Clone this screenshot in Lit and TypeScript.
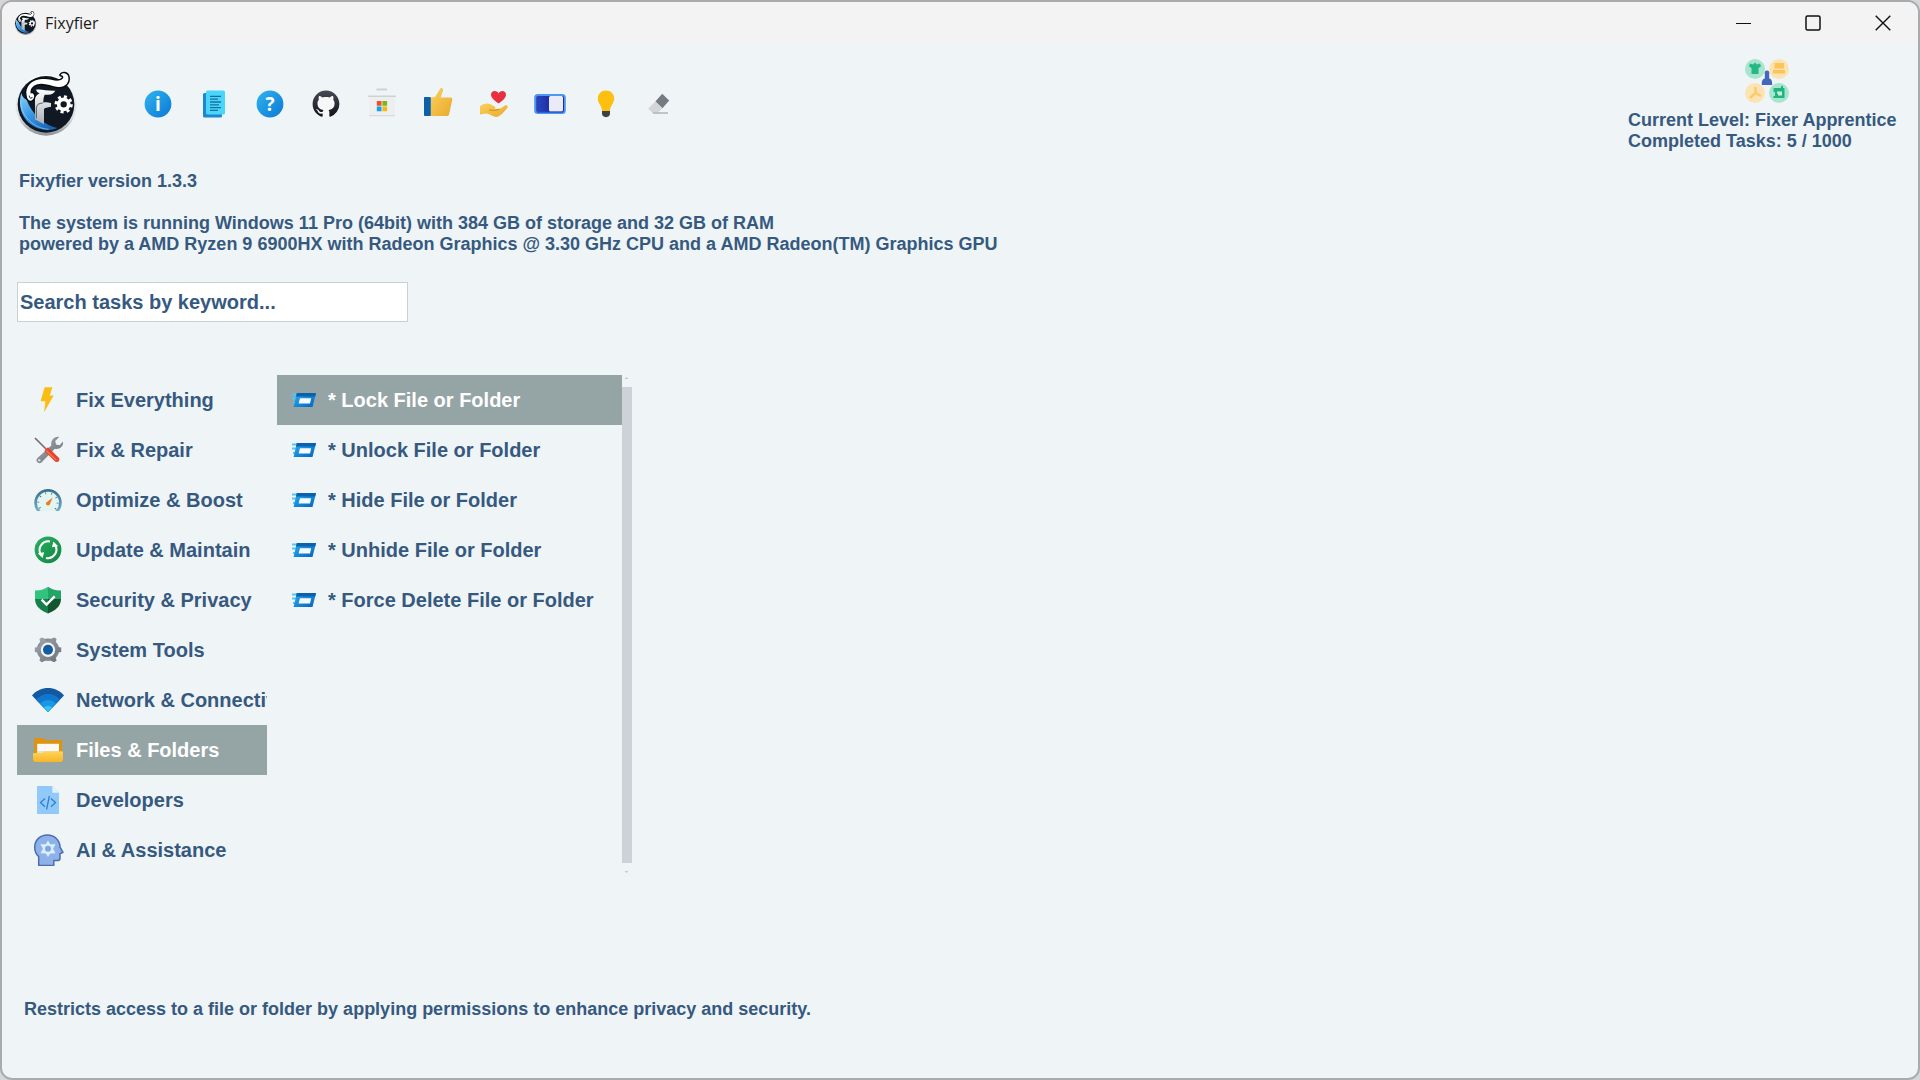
import { LitElement, html, css, svg, TemplateResult } from "lit";
import { customElement, property, state } from "lit/decorators.js";
import { classMap } from "lit/directives/class-map.js";

const logo = html`<svg viewBox="45 212 186 195" aria-hidden="true">
  <defs>
    <linearGradient id="rim" x1="0" y1="0" x2="0" y2="1">
      <stop offset="0" stop-color="#fdfdfd" /><stop offset="0.7" stop-color="#dcdee0" /><stop offset="1" stop-color="#8d9196" />
    </linearGradient>
    <linearGradient id="swoosh" x1="0" y1="0" x2="0.7" y2="1">
      <stop offset="0" stop-color="#8fd4f8" /><stop offset="0.5" stop-color="#3a9be8" /><stop offset="1" stop-color="#1765b8" />
    </linearGradient>
    <linearGradient id="stem" x1="0" y1="0" x2="0" y2="1">
      <stop offset="0" stop-color="#ffffff" /><stop offset="1" stop-color="#a9adb2" />
    </linearGradient>
  </defs>
  <circle cx="138" cy="315" r="91" fill="url(#rim)" />
  <circle cx="138" cy="312" r="85" fill="#101923" />
  <path d="M64 278C48 330 80 388 144 389C156 389 164 387 172 383C136 376 96 344 80 298C72 296 66 288 64 278Z" fill="url(#swoosh)" />
  <path d="M61 300C62 346 100 384 146 387" fill="none" stroke="#9fd8f8" stroke-width="2" />
  <path d="M80 286C74 258 96 238 126 236C148 234 166 244 180 240C192 236 194 226 182 224C186 216 202 216 205 230C208 248 194 262 174 260C152 257 132 246 112 252C96 257 90 268 92 280C98 275 106 284 101 294C95 306 82 302 80 286Z" fill="#fff" stroke="#080d12" stroke-width="9" stroke-linejoin="round" paint-order="stroke" />
  <path d="M88 286C88 295 95 296 97 290" fill="none" stroke="#101923" stroke-width="3" />
  <path d="M108 268C124 265 140 272 166 271C161 279 156 283 144 283H134C131 289 130 297 130 307C136 304 146 308 153 308V319C142 322 134 321 132 326V372L105 357V300C105 288 113 282 119 279C113 277 110 273 108 268Z" fill="url(#stem)" />
  <path d="M109 354V322C110 312 118 309 128 308" fill="none" stroke="#4d555e" stroke-width="3" />
  <circle cx="191" cy="312" r="15" fill="none" stroke="#fff" stroke-width="11" />
  <circle cx="191" cy="312" r="23" fill="none" stroke="#fff" stroke-width="9" stroke-dasharray="9.06 9" />
</svg>`;

const tool = (body: TemplateResult) => html`<svg viewBox="0 0 40 40" aria-hidden="true">
  <defs>
    <linearGradient id="azure" x1="0" y1="0" x2="1" y2="1">
      <stop offset="0" stop-color="#31b4ee" /><stop offset="1" stop-color="#0a78d6" />
    </linearGradient>
    <linearGradient id="gold" x1="0" y1="0" x2="1" y2="1">
      <stop offset="0" stop-color="#fbd15c" /><stop offset="1" stop-color="#e9a92c" />
    </linearGradient>
    <linearGradient id="track" x1="0" y1="0" x2="1" y2="0">
      <stop offset="0" stop-color="#2a49c4" /><stop offset="1" stop-color="#10147e" />
    </linearGradient>
    <linearGradient id="cat" x1="0" y1="0" x2="0" y2="1">
      <stop offset="0" stop-color="#474b55" /><stop offset="1" stop-color="#101217" />
    </linearGradient>
  </defs>
  ${body}
</svg>`;

const toolbar: { label: string; art: TemplateResult }[] = [
  {
    label: "About",
    art: svg`<circle cx="20" cy="20" r="13.4" fill="url(#azure)"/>
      <text class="mark" x="20" y="27" text-anchor="middle">i</text>`,
  },
  {
    label: "Changelog",
    art: svg`<rect x="9" y="9" width="19" height="24.4" rx="1.5" fill="#1c86d1"/>
      <rect x="12" y="6.4" width="19" height="24" rx="1.5" fill="#4cd5fb"/>
      <path d="M16 12.4h11M16 15.2h8M16 18h11M16 20.8h9M16 23.6h11M16 26.4h8" stroke="#15719f" stroke-width="1.3"/>`,
  },
  {
    label: "Help",
    art: svg`<circle cx="20" cy="20" r="13.4" fill="url(#azure)"/>
      <text class="mark" x="20" y="27" text-anchor="middle">?</text>`,
  },
  {
    label: "GitHub",
    art: svg`<circle cx="20" cy="20" r="12.6" fill="#f6f7f9"/>
      <path transform="translate(6.6 6.6) scale(1.675)" fill="url(#cat)" d="M8 0C3.58 0 0 3.58 0 8c0 3.54 2.29 6.53 5.47 7.59.4.07.55-.17.55-.38 0-.19-.01-.82-.01-1.49-2.01.37-2.53-.49-2.69-.94-.09-.23-.48-.94-.82-1.13-.28-.15-.68-.52-.01-.53.63-.01 1.08.58 1.23.82.72 1.21 1.87.87 2.33.66.07-.52.28-.87.51-1.07-1.78-.2-3.64-.89-3.64-3.95 0-.87.31-1.59.82-2.15-.08-.2-.36-1.02.08-2.12 0 0 .67-.21 2.2.82.64-.18 1.32-.27 2-.27s1.36.09 2 .27c1.53-1.04 2.2-.82 2.2-.82.44 1.1.16 1.92.08 2.12.51.56.82 1.27.82 2.15 0 3.07-1.87 3.75-3.65 3.95.29.25.54.73.54 1.48 0 1.07-.01 1.93-.01 2.2 0 .21.15.46.55.38A8.01 8.01 0 0 0 16 8c0-4.42-3.58-8-8-8Z"/>`,
  },
  {
    label: "Microsoft Store",
    art: svg`<path d="M14.5 5.6h10.500" stroke="#cfd1d4" stroke-width="2"/>
      <rect x="7" y="12" width="26" height="20" rx="1.5" fill="#eceeef"/>
      <path d="M6 12.300h28" stroke="#cfd1d4" stroke-width="1.600"/>
      <path d="M7 31.600h26" stroke="#d8dadc" stroke-width="1.400"/>
      <path d="M14.800 17h4.700v4.700h-4.700z" fill="#ee5126"/><path d="M20.400 17h4.700v4.700h-4.700z" fill="#7cb51c"/>
      <path d="M14.800 22.500h4.700v4.700h-4.700z" fill="#16a2ea"/><path d="M20.400 22.500h4.700v4.700h-4.700z" fill="#fbb612"/>`,
  },
  {
    label: "Rate",
    art: svg`<path d="M12.600 13.500L17 13L22.400 4.400C23.300 3.300 25.500 4.600 25.100 6.300L22.600 13.400H32.500C33.900 13.400 34.600 14.500 34.300 15.700L31 30.400C30.700 31.500 29.900 32 28.900 32H12.600Z" fill="url(#gold)"/>
      <rect x="6" y="13" width="6.800" height="19" rx=".8" fill="#0c5fa9"/>`,
  },
  {
    label: "Donate",
    art: svg`<path d="M24.600 19.600C19.600 16 17 13.600 17 10.800C17 6.600 22.400 5.800 24.600 9.400C26.800 5.800 32 6.600 32 10.800C32 13.600 29.600 16 24.600 19.600Z" fill="#e8303f"/>
      <path d="M6 22.200C9 20 13.500 18.600 16.500 20.300L20.500 22.600C22 23.600 21.600 24.700 20 24.700L25.500 25L31 21.500C33.500 20.400 34.700 22.600 33 24.200C30.400 27.400 27.500 31.600 22.500 33C18 32.500 16 29.600 12 29.400L6 30.400Z" fill="url(#gold)"/>
      <path d="M15 25.800C18 26.600 22 26.800 25.500 25" fill="none" stroke="#cf8b1c" stroke-width="1"/>`,
  },
  {
    label: "Switch theme",
    art: svg`<rect x="5.200" y="11" width="29.600" height="18" rx="2.500" fill="url(#track)" stroke="#4d97f0" stroke-width="2"/>
      <rect x="19" y="12" width="14" height="15.600" rx="1.500" fill="#ebebf8"/>
      <path d="M7 28.300h26" stroke="#2a63d8" stroke-width="1.200"/>`,
  },
  {
    label: "Tips",
    art: svg`<path d="M20 6.500C24.700 6.500 28.200 9.900 28.200 14.400C28.200 19.200 24 21.500 24 27H16C16 21.500 11.800 19.200 11.800 14.400C11.800 9.900 15.300 6.500 20 6.500Z" fill="#fdc010"/>
      <path d="M16 27H24V29.600C24 31.800 22.200 33.200 20 33.200S16 31.800 16 29.600Z" fill="#3d4145"/>`,
  },
  {
    label: "Clear",
    art: svg`<path d="M20.200 9.800L27.200 16.600L20.400 24.200L13.400 17.600Z" fill="#757b80"/>
      <path d="M13.400 17.600L20.400 24.200L15.400 29.300H10.800L6.900 25.500C6.300 24.900 6.300 24.300 6.900 23.700Z" fill="#d3d5d8"/>
      <path d="M11 29h15" stroke="#b3b6b9" stroke-width="1.600"/>`,
  },
];

const nav = (body: TemplateResult) => html`<svg viewBox="0 0 32 32" aria-hidden="true">
  <defs>
    <linearGradient id="steel" x1="0" y1="0" x2="1" y2="1">
      <stop offset="0" stop-color="#a6abb1" /><stop offset="1" stop-color="#686e76" />
    </linearGradient>
    <linearGradient id="green" x1="0" y1="0" x2="1" y2="1">
      <stop offset="0" stop-color="#27b15f" /><stop offset="1" stop-color="#128444" />
    </linearGradient>
    <linearGradient id="dial" x1="0" y1="0" x2="0" y2="1">
      <stop offset="0" stop-color="#3d7089" /><stop offset="1" stop-color="#79bbd9" />
    </linearGradient>
    <linearGradient id="pocket" x1="0" y1="0" x2="0" y2="1">
      <stop offset="0" stop-color="#ffd45a" /><stop offset="1" stop-color="#f7b526" />
    </linearGradient>
    <clipPath id="half"><path d="M0 0h32v27H0z" /></clipPath>
  </defs>
  ${body}
</svg>`;

const categories: { label: string; art: TemplateResult }[] = [
  {
    label: "Fix Everything",
    art: svg`<path d="M12.600 3.200H20.400L17.800 11.400H21.700L12 28.300L13.500 17.300H8.600Z" fill="#fcbd13"/>`,
  },
  {
    label: "Fix & Repair",
    art: svg`<path d="M5.500 28.300C3.800 26.800 4.300 25.300 5.500 24L19.300 11.400C18.600 5.800 22.600 2 27.200 3L23.200 7L24 10.500L27.600 11.200L31 7.400C31.800 12 27.600 15.800 22.800 14.700L9.700 28.200C8.400 29.500 7 29.600 5.500 28.300Z" fill="url(#steel)"/>
      <circle cx="7.300" cy="26.200" r="1.200" fill="#d6dade"/>
      <path d="M3 4L14.500 15.500" stroke="#7b6e70" stroke-width="1.700"/>
      <path d="M12.300 17L16 13.200L27 24C28.400 26.600 25.800 29 23.400 27.800Z" fill="#e4432d"/>
      <path d="M14.200 16.500L24.500 26.400" stroke="#f9795a" stroke-width="1.200"/>`,
  },
  {
    label: "Optimize & Boost",
    art: svg`<g clip-path="url(#half)"><circle cx="16" cy="18.700" r="12.400" fill="#e3f5f2" stroke="url(#dial)" stroke-width="2.700"/>
      <circle cx="16" cy="18.700" r="9.700" fill="none" stroke="#3a7188" stroke-width="2" stroke-dasharray=".8 5.293"/></g>
      <path d="M20.700 13.600L17.800 20.400C16.500 22.600 13.200 21 14 18.700Z" fill="#ed7b20"/>`,
  },
  {
    label: "Update & Maintain",
    art: svg`<circle cx="16" cy="15.800" r="13.400" fill="url(#green)"/>
      <path d="M18 7.600A8.600 8.600 0 0 0 8.700 20.200M14 24A8.600 8.600 0 0 0 23.300 11.400" fill="none" stroke="#fff" stroke-width="2"/>
      <path d="M5.800 19.300L12.100 18.300L10.600 24Z" fill="#fff"/><path d="M26.200 12.300L19.900 13.300L21.400 7.600Z" fill="#fff"/>`,
  },
  {
    label: "Security & Privacy",
    art: svg`<path d="M16 2.700C19 5.200 23.500 6.600 29 6.500V15.500H16Z" fill="#23a565"/><path d="M16 2.700C13 5.200 8.500 6.600 3 6.500V15.500H16Z" fill="#34c37e"/>
      <path d="M3 15C3 22 8.500 26.700 16 29.400V15Z" fill="#15804a"/><path d="M29 15C29 22 23.500 26.700 16 29.400V15Z" fill="#12562f"/>
      <path d="M9.600 15.600L14.500 20.500L22.700 12.300" fill="none" stroke="#fff" stroke-width="2.400"/>`,
  },
  {
    label: "System Tools",
    art: svg`<circle cx="16" cy="15.800" r="9.200" fill="none" stroke="#858b92" stroke-width="4"/>
      <path d="M9.700 3.400L13.200 4.800L14 7H18L18.800 4.800L22.300 3.400L24.600 5L23.200 9.400L25.800 13L29.200 13.600V18L25.800 18.600L23.200 22.200L24.600 26.600L22.300 28.200L18.800 26.800L18 24.600H14L13.200 26.800L9.700 28.200L7.400 26.600L8.800 22.200L6.200 18.600L2.800 18V13.600L6.200 13L8.800 9.400L7.400 5Z" fill="url(#steel)"/>
      <circle cx="16" cy="15.800" r="7.200" fill="#f1f5f8"/><circle cx="16" cy="15.800" r="5" fill="#135c9e"/>`,
  },
  {
    label: "Network & Connectivity",
    art: svg`<path d="M0 11.500C8 1.500 24 1.500 32 11.500L16 28Z" fill="#1259a4"/>
      <path d="M4 15.700C10.500 8.200 21.500 8.200 28 15.700L16 28Z" fill="#1177cd"/>
      <path d="M8 19.800C12.500 14.600 19.500 14.600 24 19.800L16 28Z" fill="#1a96e4"/>
      <path d="M11.800 23.700C14 21 18 21 20.200 23.700L16 28Z" fill="#37c0f4"/>`,
  },
  {
    label: "Files & Folders",
    art: svg`<path d="M2 5.800C2 4.600 3 4 4 4H11L14 6H28.500C29.500 6 30.200 6.700 30.200 7.700V22H2Z" fill="#dd9410"/>
      <path d="M5.200 9.800H27V22H5.200Z" fill="#fbf9f5"/><path d="M5.200 17H27V22H5.200Z" fill="#e4dfdb"/>
      <path d="M1 20.500C1 19.500 1.600 19 2.500 19H10L12.500 17.200H29.500C30.500 17.200 31 17.800 31 18.600V25.500C31 27 30 28 28.600 28H3.800C2.200 28 1 27 1 25.500Z" fill="url(#pocket)"/>`,
  },
  {
    label: "Developers",
    art: svg`<path d="M5 2H20.300L27 8.700V30H5Z" fill="#90c9fa"/><path d="M20.300 2V8.700H27Z" fill="#e2f2ff"/>
      <path d="M13 14.500L8.500 18.600L13 22.700M19 14.500L23.500 18.600L19 22.700M17.400 12L14.600 25.300" fill="none" stroke="#2e7fd0" stroke-width="1.300"/>`,
  },
  {
    label: "AI & Assistance",
    art: svg`<path d="M6.700 31.400V22.600C3.600 19.700 2.700 17 2.700 13.200C2.700 6 8.500 1 15.300 1C22.500 1 28 6.200 28 13.200L31 18.400L28 19.800V24.200C28 25.700 27 26.600 25.600 26.600H21.800V31.400Z" fill="#8fb1ea" stroke="#4b6fac" stroke-width="1.500" stroke-linejoin="round"/>
      <path d="M16 6.500L18.200 10.200L23.600 10.300L21 14.800L23.600 19.200L18.200 19.400L16 23.100L13.800 19.400L8.400 19.200L11 14.800L8.400 10.300L13.800 10.200Z" fill="#d8efff"/>
      <circle cx="16" cy="14.800" r="3" fill="#7ea6dc"/>`,
  },
];

const runIcon = html`<svg viewBox="0 0 24 24" aria-hidden="true">
  <defs>
    <linearGradient id="run" x1="0" y1="0" x2="1" y2="1">
      <stop offset="0" stop-color="#28b0f2" /><stop offset="1" stop-color="#0562bd" />
    </linearGradient>
  </defs>
  <path d="M0 6.500h6M0 10.500h6M1 15h5" stroke="#54c8f5" stroke-width="2" />
  <path d="M4.800 5H24L20.500 19H1.600Z" fill="url(#run)" />
  <path d="M4.800 5H24L23.200 8.500H4Z" fill="#0a61ae" />
  <path d="M8 10.300H19.200L18 15.500H6.600Z" fill="#f8fbff" />
</svg>`;

const levelIcon = html`<svg viewBox="0 0 44 44" aria-hidden="true">
  <circle cx="10" cy="10" r="10" fill="#a8e4ce" /><circle cx="34" cy="10" r="10" fill="#fce3b3" />
  <circle cx="10" cy="34" r="10" fill="#fce3b3" /><circle cx="34" cy="34" r="10" fill="#a8e4ce" />
  <path d="M5 4.500L8 5.500L10 3.500L12 5.500L15 4.500L16 7.500L13.500 9V15H6.500V9L4 7.500Z" fill="#25b884" />
  <path d="M29.500 4H39V9.500H29.500ZM28 11H40V14.500H28Z" fill="#fdc457" />
  <path d="M10.500 28V34L5 39M10.500 34L16 37" stroke="#fcca66" stroke-width="2.400" fill="none" />
  <path d="M28.500 29H36V27H38V29H39.500V39H28.500V37H30V33H28.500Z" fill="#1db67f" />
  <path d="M32 32.500H37V36.500H33V34.500H32Z" fill="#c5efdf" />
  <path d="M22 11.500C24 11.500 24.600 13 24.200 14.800V19.500C27 20.200 27.200 22.500 27.200 26H16.800C16.800 22.500 17 20.200 19.800 19.500V14.800C19.400 13 20 11.500 22 11.500Z" fill="#4567bb" />
</svg>`;

const tasks = [
  "* Lock File or Folder",
  "* Unlock File or Folder",
  "* Hide File or Folder",
  "* Unhide File or Folder",
  "* Force Delete File or Folder",
];

@customElement("menu-row")
export class MenuRow extends LitElement {
  @property() label = "";
  @property({ type: Boolean }) selected = false;
  @property({ attribute: false }) icon?: TemplateResult;
  @property({ type: Boolean, reflect: true }) compact = false;

  static styles = css`
    :host {
      display: block;
    }
    .row {
      display: flex;
      align-items: center;
      gap: 12px;
      width: 100%;
      height: 50px;
      padding: 0 0 0 15px;
      border: 0;
      background: none;
      color: #36597f;
      font: bold 20px/24px "Liberation Sans", Arial, sans-serif;
      text-align: left;
      white-space: nowrap;
      overflow: hidden;
      cursor: pointer;
    }
    .selected {
      background: #95a5a6;
      color: #fff;
    }
    svg {
      display: block;
      flex: none;
      width: 32px;
      height: 32px;
    }
    :host([compact]) svg {
      width: 24px;
      height: 24px;
    }
  `;

  render() {
    return html`<button class=${classMap({ row: true, selected: this.selected })} type="button" aria-pressed=${this.selected}>
      ${this.icon}<span>${this.label}</span>
    </button>`;
  }
}

@customElement("app-root")
export class AppRoot extends LitElement {
  @state() private category = 7;
  @state() private task = 0;

  static styles = css`
    :host {
      display: block;
      background: #d4d6d9;
      color: #36597f;
      font: bold 18px/21px "Liberation Sans", Arial, sans-serif;
    }
    * {
      box-sizing: border-box;
    }
    button {
      display: grid;
      place-items: center;
      padding: 0;
      border: 0;
      background: none;
      cursor: pointer;
    }
    svg {
      display: block;
    }
    p {
      margin: 0;
    }
    .window {
      display: flex;
      flex-direction: column;
      min-height: 100vh;
      border: 2px solid #a9abad;
      border-radius: 12px;
      background: #eff4f7;
      overflow: hidden;
    }
    .titlebar {
      display: flex;
      align-items: center;
      gap: 8px;
      height: 41px;
      padding-left: 12px;
      background: #f3f3f3;
      color: #1b1b1b;
      font: 16px/24px "Open Sans", "Noto Sans", sans-serif;
    }
    .titlebar > svg {
      width: 23px;
      height: 24px;
    }
    .caption {
      display: flex;
      margin-left: auto;
    }
    .caption button {
      width: 70px;
      height: 41px;
    }
    .caption svg {
      width: 16px;
      height: 16px;
      fill: none;
      stroke: #111;
    }
    .header {
      display: flex;
      align-items: flex-start;
      padding: 16px 12px 0 13px;
    }
    .logo {
      margin-top: 12px;
    }
    .logo svg {
      width: 62px;
      height: 65px;
    }
    .toolbar {
      display: flex;
      gap: 16px;
      margin: 25px 0 0 61px;
    }
    .toolbar button,
    .toolbar svg {
      width: 40px;
      height: 40px;
    }
    .mark {
      fill: #fff;
      font: bold 19px "Open Sans", sans-serif;
    }
    .level {
      display: flex;
      flex-direction: column;
      align-items: center;
      gap: 7px;
      width: 278px;
      margin-left: auto;
    }
    .level div {
      width: 100%;
    }
    .level svg {
      width: 44px;
      height: 44px;
    }
    .info {
      display: grid;
      gap: 21px;
      padding: 19px 17px 0;
    }
    .search {
      width: 391px;
      max-width: 100%;
      height: 40px;
      margin: 27px 0 0 15px;
      padding: 0 2px;
      border: 1px solid #c9d0d6;
      outline: none;
      background: #fff;
      color: #36597f;
      font: bold 20px/24px "Liberation Sans", Arial, sans-serif;
    }
    .search::placeholder {
      color: #36597f;
      opacity: 1;
    }
    .lists {
      display: flex;
      gap: 10px;
      padding: 53px 15px 0;
    }
    .categories {
      width: 250px;
    }
    .tasks {
      display: flex;
    }
    .items {
      width: 345px;
    }
    .scroll {
      display: flex;
      flex-direction: column;
      align-items: center;
      width: 10px;
    }
    .scroll svg {
      width: 10px;
      height: 12px;
      fill: #c3c9ce;
    }
    .thumb {
      flex: 1;
      width: 10px;
      background: #cdd2d8;
    }
    .status {
      margin-top: auto;
      padding: 20px 22px 58px;
    }
  `;

  render() {
    return html`
      <div class="window">
        <header class="titlebar">
          ${logo}<span>Fixyfier</span>
          <div class="caption">
            <button type="button" aria-label="Minimize"><svg viewBox="0 0 16 16"><path d="M1 8.500h15" /></svg></button>
            <button type="button" aria-label="Maximize">
              <svg viewBox="0 0 16 16"><rect x="1" y="1" width="14" height="14" rx="1.500" stroke-width="1.500" /></svg>
            </button>
            <button type="button" aria-label="Close">
              <svg viewBox="0 0 16 16"><path d="M.7.7l14.600 14.600M15.300.7L.7 15.300" stroke-width="1.400" /></svg>
            </button>
          </div>
        </header>

        <div class="header">
          <div class="logo">${logo}</div>
          <div class="toolbar">
            ${toolbar.map((t) => html`<button type="button" aria-label=${t.label}>${tool(t.art)}</button>`)}
          </div>
          <div class="level">
            ${levelIcon}
            <div>
              <p>Current Level: Fixer Apprentice</p>
              <p>Completed Tasks: 5 / 1000</p>
            </div>
          </div>
        </div>

        <div class="info">
          <p>Fixyfier version 1.3.3</p>
          <p>
            The system is running Windows 11 Pro (64bit) with 384 GB of storage and 32 GB of RAM<br />
            powered by a AMD Ryzen 9 6900HX with Radeon Graphics @ 3.30 GHz CPU and a AMD Radeon(TM) Graphics GPU
          </p>
        </div>

        <input class="search" type="text" aria-label="Search tasks by keyword" placeholder="Search tasks by keyword..." />

        <div class="lists">
          <nav class="categories">
            ${categories.map(
              (c, i) => html`<menu-row
                .label=${c.label}
                .icon=${nav(c.art)}
                .selected=${i === this.category}
                @click=${() => (this.category = i)}
              ></menu-row>`
            )}
          </nav>
          <div class="tasks">
            <div class="items">
              ${tasks.map(
                (t, i) => html`<menu-row
                  compact
                  .label=${t}
                  .icon=${runIcon}
                  .selected=${i === this.task}
                  @click=${() => (this.task = i)}
                ></menu-row>`
              )}
            </div>
            <div class="scroll">
              <svg viewBox="0 0 10 12" aria-hidden="true"><path d="M2.500 4L4.500 2L6.500 4Z" /></svg>
              <div class="thumb"></div>
              <svg viewBox="0 0 10 12" aria-hidden="true"><path d="M2.500 8L4.500 10L6.500 8Z" /></svg>
            </div>
          </div>
        </div>

        <p class="status">Restricts access to a file or folder by applying permissions to enhance privacy and security.</p>
      </div>
    `;
  }
}
